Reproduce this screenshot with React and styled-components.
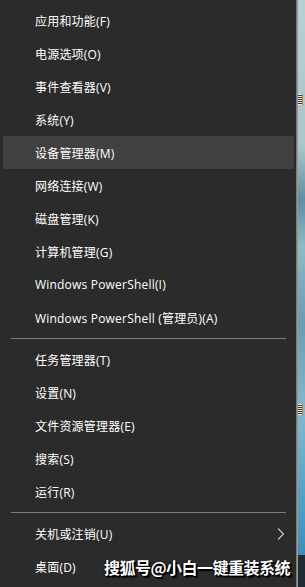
import React from 'react'
import styled, { createGlobalStyle } from 'styled-components';

const GlobalStyle = createGlobalStyle`
  html, body {
    margin: 0;
    padding: 0;
    background: #2b2b2b;
    overflow: hidden;
  }
`;

const Screen = styled.div`
  display: flex;
  width: 305px;
  height: 587px;
  font-family: "Open Sans", "Noto Sans CJK SC", sans-serif;
`;

const Menu = styled.div`
  position: relative;
  width: 296px;
  background: #2b2b2b;
  padding-top: 4px;
  box-sizing: border-box;
`;

const Edge = styled.div`
  width: 2px;
  background: linear-gradient(to right, #6f6f6f, #a3a3a3);
`;

const Desktop = styled.div`
  position: relative;
  flex: 1;
  background: linear-gradient(
    to bottom,
    #b9d0cf 0%,
    #a9c6c8 25%,
    #5f8ea0 34%,
    #8fb9c6 42%,
    #6a9db2 55%,
    #84b8cf 70%,
    #4a9cc4 88%,
    #3f8db6 94.5%,
    #1f2c33 94.6%,
    #1f2c33 100%
  );
`;

const DeskIcon = styled.div`
  position: absolute;
  left: 0;
  top: ${p => p.top}px;
  width: 4px;
  height: 11px;
  background: repeating-linear-gradient(to bottom, #e8e8e8 0 1px, #333 1px 2px);
  border-right: 1px solid #c77a2a;
`;

const Row = styled.div`
  display: flex;
  align-items: center;
  justify-content: space-between;
  height: 33px;
  margin: 0 2px 0 3px;
  padding: 0 9px 0 32px;
  background: ${p => (p.active ? '#414141' : 'transparent')};
  color: #ffffff;
  font-size: 12px;
  letter-spacing: 0.2px;
  white-space: nowrap;
`;

const Separator = styled.div`
  height: 1px;
  margin: 4px 10px 4px 11px;
  background: #7c7c7c;
`;

const Watermark = styled.div`
  position: absolute;
  left: 104px;
  top: 555px;
  color: #ffffff;
  font-family: "Noto Sans CJK SC", sans-serif;
  font-size: 16px;
  font-weight: 700;
  letter-spacing: -0.5px;
  text-shadow: 1px 1px 0 #000, 2px 2px 1px #000, -1px 0 0 #000;
  white-space: nowrap;
`;

const Chevron = () => (
  <svg width="8" height="12" viewBox="0 0 8 12">
    <polyline points="1,0.5 6.5,6 1,11.5" fill="none" stroke="#c8c8c8" strokeWidth="1.1" />
  </svg>
);

const groups = [
  [
    { label: '应用和功能(F)' },
    { label: '电源选项(O)' },
    { label: '事件查看器(V)' },
    { label: '系统(Y)' },
    { label: '设备管理器(M)', active: true },
    { label: '网络连接(W)' },
    { label: '磁盘管理(K)' },
    { label: '计算机管理(G)' },
    { label: 'Windows PowerShell(I)' },
    { label: 'Windows PowerShell (管理员)(A)' },
  ],
  [
    { label: '任务管理器(T)' },
    { label: '设置(N)' },
    { label: '文件资源管理器(E)' },
    { label: '搜索(S)' },
    { label: '运行(R)' },
  ],
  [
    { label: '关机或注销(U)', sub: true },
    { label: '桌面(D)' },
  ],
];

const App = () => (
  <>
    <GlobalStyle />
    <Screen>
      <Menu>
        {groups.map((items, gi) => (
          <React.Fragment key={gi}>
            {gi > 0 && <Separator />}
            {items.map(item => (
              <Row key={item.label} active={item.active}>
                <span>{item.label}</span>
                {item.sub && <Chevron />}
              </Row>
            ))}
          </React.Fragment>
        ))}
        <Watermark>搜狐号@小白一键重装系统</Watermark>
      </Menu>
      <Edge />
      <Desktop>
        <DeskIcon top={94} />
        <DeskIcon top={404} />
      </Desktop>
    </Screen>
  </>
)

export default App
